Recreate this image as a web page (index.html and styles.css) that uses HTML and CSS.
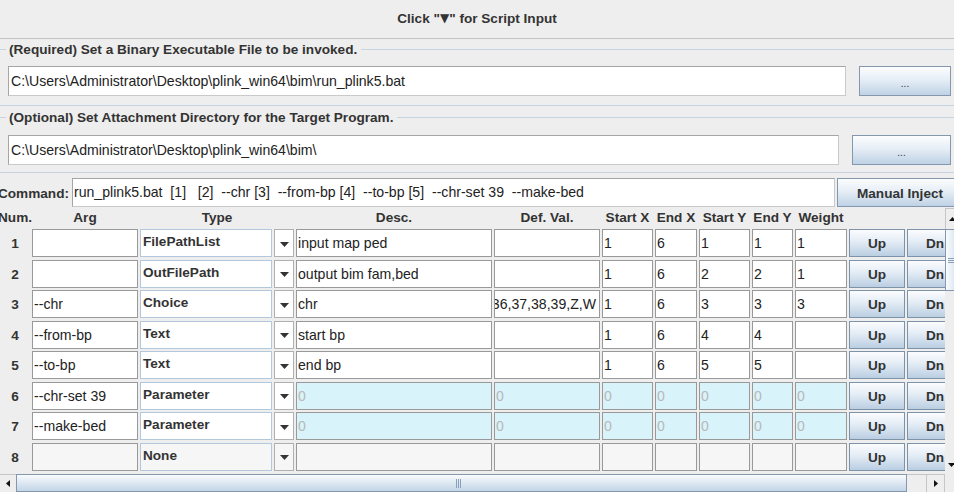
FILE: index.html
```html
<!DOCTYPE html>
<html>
<head>
<meta charset="utf-8">
<title>Script Input</title>
<link rel="stylesheet" href="styles.css">
</head>
<body>
<div class="app">
  <div class="title">Click "<span class="tri">▼</span>" for Script Input</div>

  <div class="group g1">
    <div class="legend"><span>(Required) Set a Binary Executable File to be invoked.</span></div>
    <div class="field-row">
      <div class="tf">C:\Users\Administrator\Desktop\plink_win64\bim\run_plink5.bat</div>
      <div class="btn dots b1">...</div>
    </div>
  </div>

  <div class="group g2">
    <div class="legend"><span>(Optional) Set Attachment Directory for the Target Program.</span></div>
    <div class="field-row">
      <div class="tf">C:\Users\Administrator\Desktop\plink_win64\bim\</div>
      <div class="btn dots b2">...</div>
    </div>
  </div>

  <div class="cmd-row">
    <div class="cmd-label">Command:</div>
    <div class="tf cmd-tf">run_plink5.bat&nbsp; [1]&nbsp;&nbsp; [2]&nbsp; --chr [3]&nbsp; --from-bp [4]&nbsp; --to-bp [5]&nbsp; --chr-set 39&nbsp; --make-bed</div>
    <div class="btn inject">Manual Inject</div>
  </div>

  <div class="table">
    <div class="tmain">
      <div class="viewport">
        <div class="grid thead">
          <div class="h">Num.</div>
          <div class="h">Arg</div>
          <div class="h span2">Type</div>
          <div class="h">Desc.</div>
          <div class="h">Def. Val.</div>
          <div class="h">Start X</div>
          <div class="h">End X</div>
          <div class="h">Start Y</div>
          <div class="h">End Y</div>
          <div class="h">Weight</div>
          <div class="h span2"></div>
        </div>
        <div class="grid tbody">
          <div class="n">1</div><div class="c"></div><div class="c ty">FilePathList</div><div class="c ar"><svg width="9" height="5" viewBox="0 0 9 5"><path d="M0 0H9L4.5 5Z" fill="#333"/></svg></div><div class="c">input map ped</div><div class="c"></div><div class="c">1</div><div class="c">6</div><div class="c">1</div><div class="c">1</div><div class="c">1</div><div class="bt">Up</div><div class="bt">Dn</div>

          <div class="n">2</div><div class="c"></div><div class="c ty">OutFilePath</div><div class="c ar"><svg width="9" height="5" viewBox="0 0 9 5"><path d="M0 0H9L4.5 5Z" fill="#333"/></svg></div><div class="c">output bim fam,bed</div><div class="c"></div><div class="c">1</div><div class="c">6</div><div class="c">2</div><div class="c">2</div><div class="c">1</div><div class="bt">Up</div><div class="bt">Dn</div>

          <div class="n">3</div><div class="c">--chr</div><div class="c ty">Choice</div><div class="c ar"><svg width="9" height="5" viewBox="0 0 9 5"><path d="M0 0H9L4.5 5Z" fill="#333"/></svg></div><div class="c">chr</div><div class="c endtext"><span>5,36,37,38,39,Z,W</span></div><div class="c">1</div><div class="c">6</div><div class="c">3</div><div class="c">3</div><div class="c">3</div><div class="bt">Up</div><div class="bt">Dn</div>

          <div class="n">4</div><div class="c">--from-bp</div><div class="c ty">Text</div><div class="c ar"><svg width="9" height="5" viewBox="0 0 9 5"><path d="M0 0H9L4.5 5Z" fill="#333"/></svg></div><div class="c">start bp</div><div class="c"></div><div class="c">1</div><div class="c">6</div><div class="c">4</div><div class="c">4</div><div class="c"></div><div class="bt">Up</div><div class="bt">Dn</div>

          <div class="n">5</div><div class="c">--to-bp</div><div class="c ty">Text</div><div class="c ar"><svg width="9" height="5" viewBox="0 0 9 5"><path d="M0 0H9L4.5 5Z" fill="#333"/></svg></div><div class="c">end bp</div><div class="c"></div><div class="c">1</div><div class="c">6</div><div class="c">5</div><div class="c">5</div><div class="c"></div><div class="bt">Up</div><div class="bt">Dn</div>

          <div class="n">6</div><div class="c">--chr-set 39</div><div class="c ty">Parameter</div><div class="c ar"><svg width="9" height="5" viewBox="0 0 9 5"><path d="M0 0H9L4.5 5Z" fill="#333"/></svg></div><div class="c pm">0</div><div class="c pm">0</div><div class="c pm">0</div><div class="c pm">0</div><div class="c pm">0</div><div class="c pm">0</div><div class="c pm">0</div><div class="bt">Up</div><div class="bt">Dn</div>

          <div class="n">7</div><div class="c">--make-bed</div><div class="c ty">Parameter</div><div class="c ar"><svg width="9" height="5" viewBox="0 0 9 5"><path d="M0 0H9L4.5 5Z" fill="#333"/></svg></div><div class="c pm">0</div><div class="c pm">0</div><div class="c pm">0</div><div class="c pm">0</div><div class="c pm">0</div><div class="c pm">0</div><div class="c pm">0</div><div class="bt">Up</div><div class="bt">Dn</div>

          <div class="n">8</div><div class="c off"></div><div class="c ty off">None</div><div class="c ar off"><svg width="9" height="5" viewBox="0 0 9 5"><path d="M0 0H9L4.5 5Z" fill="#333"/></svg></div><div class="c off"></div><div class="c off"></div><div class="c off"></div><div class="c off"></div><div class="c off"></div><div class="c off"></div><div class="c off"></div><div class="bt">Up</div><div class="bt">Dn</div>

          <div class="n"></div><div class="c off"></div><div class="c ty off"></div><div class="c ar off"></div><div class="c off"></div><div class="c off"></div><div class="c off"></div><div class="c off"></div><div class="c off"></div><div class="c off"></div><div class="c off"></div><div class="bt"></div><div class="bt"></div>
        </div>
      </div>
      <div class="vscroll">
        <div class="sb-btn vb-up"><svg width="7" height="4" viewBox="0 0 7 4"><path d="M0 4H7L3.5 0Z" fill="#111"/></svg></div>
        <div class="vthumb"><svg width="7" height="5" viewBox="0 0 7 5"><path d="M0 0.5H7M0 2.5H7M0 4.5H7" stroke="#8aa0b8" stroke-width="1"/></svg></div>
        <div class="vtrack"></div>
        <div class="sb-btn vb-down"><svg width="7" height="4" viewBox="0 0 7 4"><path d="M0 0H7L3.5 4Z" fill="#111"/></svg></div>
      </div>
    </div>
    <div class="hscroll">
      <div class="sb-btn hb-left"><svg width="4" height="7" viewBox="0 0 4 7"><path d="M4 0V7L0 3.5Z" fill="#111"/></svg></div>
      <div class="hthumb"><svg width="5" height="9" viewBox="0 0 5 9"><path d="M0.5 0V9M2.5 0V9M4.5 0V9" stroke="#8aa0b8" stroke-width="1"/></svg></div>
      <div class="htrack"></div>
      <div class="sb-btn hb-right"><svg width="4" height="7" viewBox="0 0 4 7"><path d="M0 0V7L4 3.5Z" fill="#111"/></svg></div>
      <div class="corner"></div>
    </div>
  </div>
</div>
</body>
</html>
```

FILE: styles.css
```css
html, body {
  margin: 0;
  padding: 0;
  overflow: hidden;
  background: #eeeeee;
}

.app {
  width: 954px;
  height: 492px;
  overflow: hidden;
  font-family: "Liberation Sans", Arial, sans-serif;
  font-size: 13.6px;
  color: #222;
  background: #eeeeee;
}

.title {
  height: 38px;
  line-height: 37px;
  text-align: center;
  font-weight: bold;
  color: #333;
  border-bottom: 1px solid #c3c3c3;
}

.tri {
  font-family: "DejaVu Sans", sans-serif;
  font-size: 12px;
  position: relative;
  top: -1px;
}

.group {
  border-bottom: 1px solid #c6d3e0;
}

.g1 {
  padding: 3px 0 9px;
}

.g2 {
  margin-top: 4px;
  padding: 0 0 7px;
}

.legend {
  display: flex;
  align-items: center;
  height: 14px;
  font-weight: bold;
  color: #333;
  white-space: nowrap;
}

.legend::before {
  content: "";
  width: 6px;
  border-top: 1px solid #c6d3e0;
}

.legend::after {
  content: "";
  flex: 1;
  border-top: 1px solid #c6d3e0;
}

.legend span {
  margin: 0 4px 0 3px;
}

.field-row {
  display: flex;
  gap: 13px;
  height: 30px;
  padding: 0 3px 0 8px;
}

.g1 .field-row {
  margin-top: 10px;
}

.g2 .field-row {
  margin-top: 11px;
}

.tf {
  flex: 1;
  box-sizing: border-box;
  background: #fff;
  border: 1px solid #a5a5a5;
  border-right-color: #c9c9c9;
  border-bottom-color: #c9c9c9;
  padding: 0 2px;
  font-size: 14.1px;
  line-height: 28px;
  white-space: nowrap;
  overflow: hidden;
  color: #222;
}

.btn {
  box-sizing: border-box;
  border: 1px solid #8497ac;
  background: linear-gradient(#fcfdfe 0%, #e6eef6 45%, #bfd2e5 100%);
  color: #333;
  display: flex;
  align-items: center;
  justify-content: center;
  white-space: nowrap;
}

.dots {
  font-size: 10px;
  padding-top: 4px;
}

.b1 {
  width: 92px;
}

.b2 {
  width: 99px;
}

.cmd-row {
  display: flex;
  align-items: stretch;
  height: 29px;
  margin-top: 5px;
  width: 970px;
}

.cmd-label {
  margin-left: -2px;
  width: 74px;
  font-weight: bold;
  color: #333;
  line-height: 32px;
  white-space: nowrap;
}

.cmd-tf {
  flex: none;
  width: 763px;
  line-height: 26px;
  padding: 0 1px;
}

.inject {
  flex: none;
  width: 126px;
  margin-left: 2px;
  font-weight: bold;
  padding-top: 2px;
}

.table {
  display: flex;
  flex-direction: column;
}

.tmain {
  display: flex;
  height: 267px;
}

.viewport {
  width: 945px;
  flex: none;
  overflow: hidden;
}

.grid {
  display: grid;
  grid-template-columns: 30px 106px 132px 20px 196px 106px 51px 42px 51px 41px 52px 56px 56px;
  column-gap: 2px;
  width: 963px;
}

.thead {
  height: 21px;
}

.h {
  font-weight: bold;
  color: #333;
  line-height: 21px;
  white-space: nowrap;
  display: flex;
  justify-content: center;
  overflow: visible;
}

.span2 {
  grid-column: span 2;
}

.tbody {
  grid-auto-rows: 28px;
  row-gap: 2.57px;
  padding-top: 1px;
}

.n {
  font-weight: bold;
  color: #333;
  text-align: center;
  line-height: 29px;
}

.c {
  box-sizing: border-box;
  background: #fff;
  border: 1px solid #999999;
  padding: 0 1px;
  font-size: 14.1px;
  line-height: 26px;
  white-space: nowrap;
  overflow: hidden;
  color: #222;
}

.ty {
  border-color: #b3c8dd;
  font-weight: bold;
  font-size: 13.6px;
  color: #333;
  padding: 0 2px;
  line-height: 24px;
}

.ar {
  display: flex;
  align-items: center;
  justify-content: center;
  padding: 2px 0 0;
  border-color: #b0b0b0;
}

.endtext {
  display: flex;
  justify-content: flex-end;
  padding-right: 3px;
}

.pm {
  background: #d8f3fa;
  color: #b8b8b8;
}

.off {
  background: #f6f6f6;
}

.bt {
  box-sizing: border-box;
  border: 1px solid #7f93a8;
  background: linear-gradient(#fbfcfe 0%, #e3ecf5 45%, #bacee2 100%);
  font-weight: bold;
  color: #333;
  text-align: center;
  line-height: 28px;
}

.vscroll {
  width: 17px;
  flex: none;
  display: flex;
  flex-direction: column;
  background: #eeeeee;
}

.sb-btn {
  display: flex;
  align-items: center;
  justify-content: center;
  box-sizing: border-box;
  background: #eeeeee;
}

.vb-up {
  height: 21px;
  margin-top: 1px;
  border: 1px solid #c6c6c6;
  border-bottom: none;
  justify-content: flex-start;
  padding-left: 3px;
}

.vthumb {
  height: 62px;
  box-sizing: border-box;
  border: 1px solid #8497ac;
  background: linear-gradient(90deg, #fafcfe, #c7d8ea);
  display: flex;
  align-items: center;
  padding-left: 2px;
}

.vtrack {
  flex: 1;
  background: #eeeeee;
}

.vb-down {
  height: 18px;
  justify-content: flex-start;
  padding-left: 3px;
}

.hscroll {
  display: flex;
  height: 18px;
  background: #eeeeee;
}

.hb-left {
  width: 16px;
  border-top: 1px solid #c6c6c6;
}

.hthumb {
  width: 891px;
  box-sizing: border-box;
  border: 1px solid #8497ac;
  background: linear-gradient(#fafcfe 0%, #e2ebf4 40%, #c3d5e8 100%);
  display: flex;
  align-items: center;
  justify-content: center;
  padding-right: 6px;
}

.htrack {
  width: 19px;
  border-top: 1px solid #c6c6c6;
}

.hb-right {
  width: 19px;
  border: 1px solid #c6c6c6;
  border-bottom: none;
}

.corner {
  flex: 1;
  background: #eeeeee;
}
```
